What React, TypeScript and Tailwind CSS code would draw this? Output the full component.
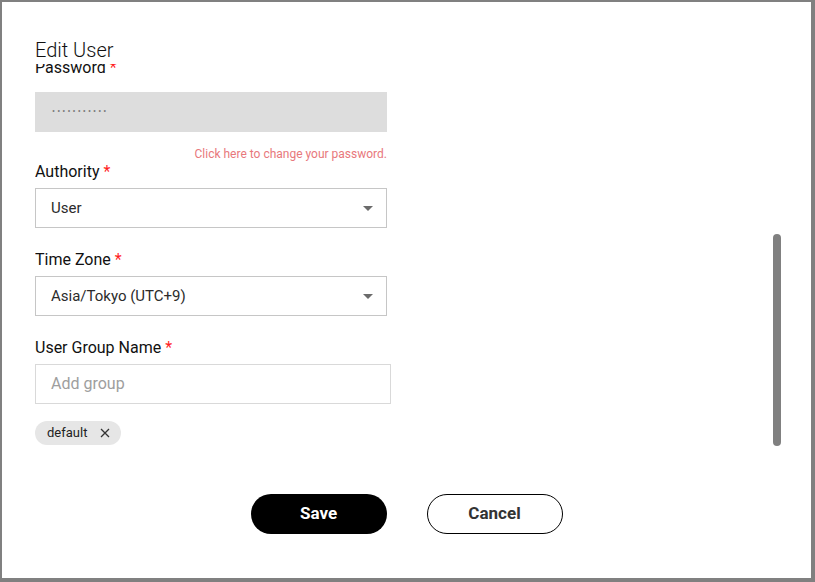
import React from 'react';

const font = { fontFamily: 'Roboto, "Noto Sans", sans-serif' };

// Dropdown caret shown at the right of each select
const Caret = () => (
  <svg width="10" height="5" viewBox="0 0 10 5" className="shrink-0">
    <path d="M0 0h10L5 5z" fill="#6b6b6b" />
  </svg>
);

const FieldLabel: React.FC<{ text: string }> = ({ text }) => (
  <div className="text-[16px] leading-[18px] text-[#111]">
    {text} <span className="text-[#ff1f1f]">*</span>
  </div>
);

const SelectBox: React.FC<{ value: string }> = ({ value }) => (
  <div className="mt-[7px] flex h-[40px] w-[352px] items-center justify-between border border-[#c6c6c6] pl-[15px] pr-[13px]">
    <span className="text-[15px] text-[#2b2b2b]">{value}</span>
    <Caret />
  </div>
);

export default function App() {
  return (
    <div className="h-[582px] w-[815px] bg-[#808080] pl-[2px] pt-[2px]" style={font}>
      <div className="flex h-[576px] w-[809px] flex-col bg-white">
        <h1 className="ml-[33px] mt-[36px] h-[24px] text-[20px] font-light leading-[24px] text-[#111]">
          Edit User
        </h1>

        {/* scrolled form body with its own scrollbar */}
        <div className="mt-[2px] flex h-[388px] pl-[33px] pr-[30px]">
          <div className="flex-1 overflow-hidden">
            <div className="-mt-[5px]">
              <FieldLabel text="Password" />
              <div className="mt-[15px] flex h-[40px] w-[352px] items-center bg-[#dddddd] pl-[17px]">
                <span className="text-[9px] tracking-[2.1px] text-[#7a7a7a]">•••••••••••</span>
              </div>
              <div className="flex w-[352px] justify-end pt-[15px]">
                <span className="text-[12px] leading-[15px] text-[#e8787c]">
                  Click here to change your password.
                </span>
              </div>

              <div className="mt-[1px]">
                <FieldLabel text="Authority" />
                <SelectBox value="User" />
              </div>

              <div className="mt-[23px]">
                <FieldLabel text="Time Zone" />
                <SelectBox value="Asia/Tokyo (UTC+9)" />
              </div>

              <div className="mt-[23px]">
                <FieldLabel text="User Group Name" />
                <div className="mt-[7px] flex h-[40px] w-[356px] items-center border border-[#d9d9d9] pl-[15px]">
                  <span className="text-[16px] text-[#9e9e9e]">Add group</span>
                </div>
                <div className="mt-[17px] flex">
                  <span className="flex h-[24px] items-center gap-[13px] rounded-full bg-[#e6e6e6] pl-[12px] pr-[11px] text-[13px] text-[#222]">
                    default
                    <svg width="10" height="10" viewBox="0 0 10 10">
                      <path d="M1 1l8 8M9 1L1 9" stroke="#333" strokeWidth="1.3" />
                    </svg>
                  </span>
                </div>
              </div>
            </div>
          </div>
          <div className="w-[8px]">
            <div className="mt-[170px] h-[212px] w-[8px] rounded-full bg-[#808080]" />
          </div>
        </div>

        <div className="mt-[42px] flex justify-center gap-[40px]">
          <button className="h-[40px] w-[136px] rounded-full bg-black text-[17px] font-bold text-white">
            Save
          </button>
          <button className="h-[40px] w-[136px] rounded-full border border-black bg-white text-[17px] font-bold text-[#333]">
            Cancel
          </button>
        </div>
      </div>
    </div>
  );
}
